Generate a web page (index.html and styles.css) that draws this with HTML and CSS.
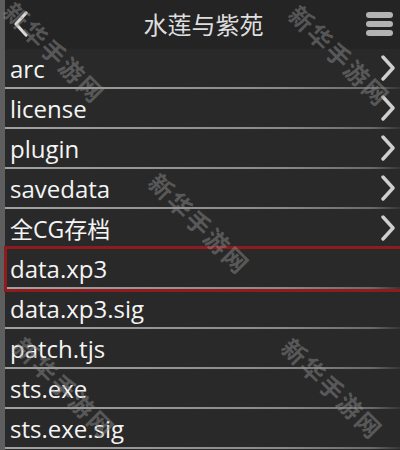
FILE: index.html
```html
<!DOCTYPE html>
<html lang="zh">
<head>
<meta charset="utf-8">
<title>水莲与紫苑</title>
<link rel="stylesheet" href="styles.css">
</head>
<body>
<div class="screen">
  <div class="strip"></div>
  <div class="main">
    <header class="bar">
      <svg class="back" width="16" height="26" viewBox="0 0 16 26"><polyline points="13,2 3,13 13,24" fill="none" stroke="#dcdcdc" stroke-width="3.2" stroke-linecap="round" stroke-linejoin="round"/></svg>
      <div class="title">水莲与紫苑</div>
      <div class="menu"><span></span><span></span><span></span></div>
    </header>
    <ul class="list">
      <li class="row dir"><span class="name">arc</span><svg class="chev" width="16" height="26" viewBox="0 0 16 26"><polyline points="3,2 13,13 3,24" fill="none" stroke="#cfcfcf" stroke-width="3.4" stroke-linecap="round" stroke-linejoin="round"/></svg></li>
      <li class="row dir"><span class="name">license</span><svg class="chev" width="16" height="26" viewBox="0 0 16 26"><polyline points="3,2 13,13 3,24" fill="none" stroke="#cfcfcf" stroke-width="3.4" stroke-linecap="round" stroke-linejoin="round"/></svg></li>
      <li class="row dir"><span class="name">plugin</span><svg class="chev" width="16" height="26" viewBox="0 0 16 26"><polyline points="3,2 13,13 3,24" fill="none" stroke="#cfcfcf" stroke-width="3.4" stroke-linecap="round" stroke-linejoin="round"/></svg></li>
      <li class="row dir"><span class="name">savedata</span><svg class="chev" width="16" height="26" viewBox="0 0 16 26"><polyline points="3,2 13,13 3,24" fill="none" stroke="#cfcfcf" stroke-width="3.4" stroke-linecap="round" stroke-linejoin="round"/></svg></li>
      <li class="row dir"><span class="name cjk">全CG存档</span><svg class="chev" width="16" height="26" viewBox="0 0 16 26"><polyline points="3,2 13,13 3,24" fill="none" stroke="#cfcfcf" stroke-width="3.4" stroke-linecap="round" stroke-linejoin="round"/></svg></li>
      <li class="row selected"><span class="name">data.xp3</span></li>
      <li class="row"><span class="name">data.xp3.sig</span></li>
      <li class="row"><span class="name">patch.tjs</span></li>
      <li class="row"><span class="name">sts.exe</span></li>
      <li class="row"><span class="name">sts.exe.sig</span></li>
    </ul>
  </div>
  <span class="wm wm1">新华手游网</span>
  <span class="wm wm2">新华手游网</span>
  <span class="wm wm3">新华手游网</span>
  <span class="wm wm4">新华手游网</span>
  <span class="wm wm5">新华手游网</span>
</div>
</body>
</html>
```
FILE: styles.css
```css
html, body {
  margin: 0;
  padding: 0;
  background: #282828;
}
.screen {
  position: relative;
  width: 400px;
  height: 450px;
  overflow: hidden;
  display: flex;
  background: #292929;
  font-family: "Open Sans", "Noto Sans CJK SC", sans-serif;
}
.strip {
  width: 5px;
  flex: none;
  background: #5e5e5e;
}
.main {
  flex: 1;
  display: flex;
  flex-direction: column;
}
.bar {
  height: 49px;
  flex: none;
  display: flex;
  align-items: center;
  background: #242424;
  padding: 0 7px 0 8px;
}
.back {
  display: block;
  flex: none;
  margin-top: -1px;
}
.title {
  flex: 1;
  text-align: center;
  color: #dedede;
  font-family: "Noto Sans CJK SC", sans-serif;
  font-size: 24px;
  padding-left: 12px;
  margin-top: -2px;
}
.menu {
  width: 27px;
  display: flex;
  flex-direction: column;
  gap: 3px;
  margin-top: -1px;
}
.menu span {
  display: block;
  height: 6px;
  border-radius: 3px;
  background: #b3b3b3;
}
.list {
  list-style: none;
  margin: 0;
  padding: 0;
}
.row {
  position: relative;
  height: 38px;
  display: flex;
  align-items: center;
  padding-left: 5px;
  padding-right: 4px;
}
.row::before {
  content: "";
  position: absolute;
  left: 0;
  right: 0;
  bottom: -2px;
  height: 2px;
  background: linear-gradient(to right, #a2a2a2, #8a8a8a 70%, #6a6a6a 93%, rgba(80,80,80,0.3));
}
.row + .row {
  margin-top: 2px;
}
.name {
  flex: 1;
  color: #f4f4f4;
  font-size: 24px;
  line-height: 38px;
  margin-top: 1px;
}
.name.cjk {
  font-family: "Open Sans", "Noto Sans CJK SC", sans-serif;
  font-size: 23px;
}
.chev {
  display: block;
  flex: none;
}
.selected::after {
  content: "";
  position: absolute;
  left: -1px;
  right: -3px;
  top: -3px;
  bottom: -5px;
  border: 3px solid #8e1b1e;
  border-right: none;
}
.wm {
  position: absolute;
  white-space: nowrap;
  font-family: "Noto Sans CJK SC", sans-serif;
  font-weight: 700;
  font-size: 24px;
  letter-spacing: 2px;
  color: rgba(150,150,150,0.45);
  transform: translate(-50%, -50%) rotate(45deg);
  pointer-events: none;
}
.wm1 { left: 55px; top: 52px; }
.wm2 { left: 340px; top: 55px; }
.wm3 { left: 200px; top: 223px; }
.wm4 { left: 333px; top: 388px; }
.wm5 { left: 65px; top: 387px; }
```
